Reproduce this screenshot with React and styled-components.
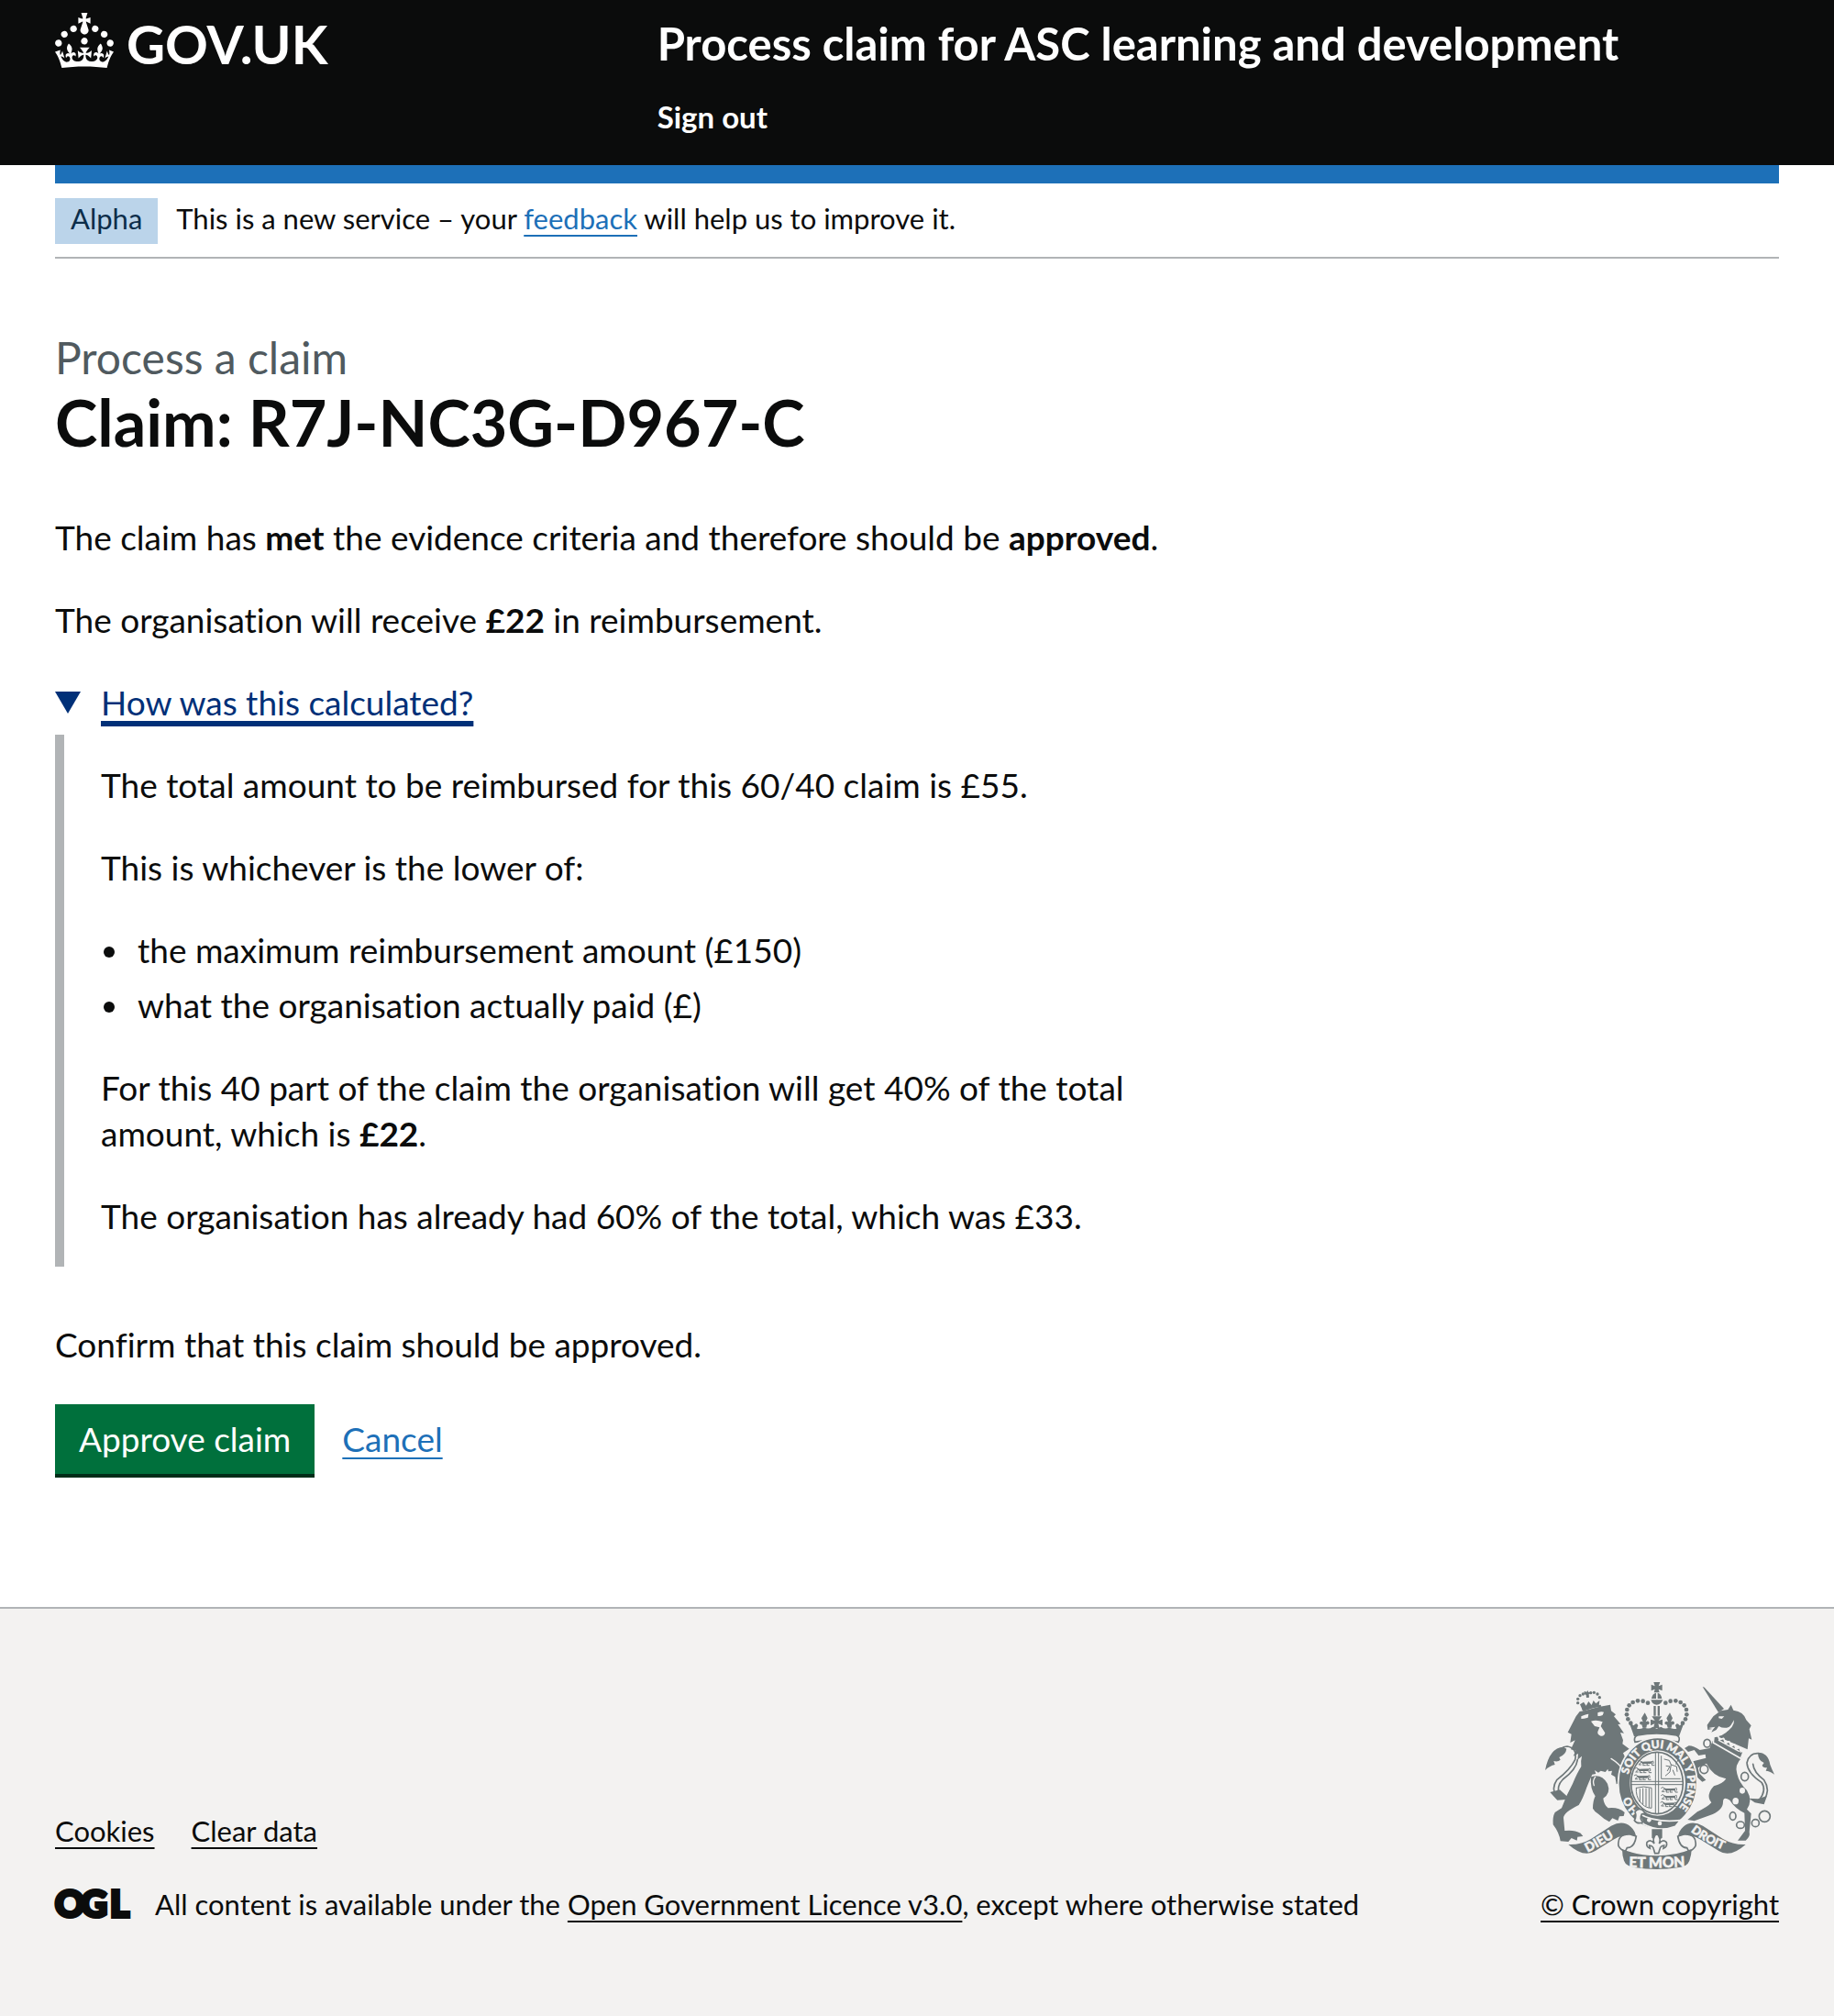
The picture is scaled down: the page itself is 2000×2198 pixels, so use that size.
import React from "react";
import styled, { createGlobalStyle, css } from "styled-components";

const color = {
  ink: "#0b0c0c",
  link: "#1d70b8",
  linkHover: "#003078",
  secondary: "#505a5f",
  border: "#b1b4b6",
  panel: "#f3f2f1",
  crest: "#6e7779",
};

const GlobalStyle = createGlobalStyle`
  *, *::before, *::after { box-sizing: border-box; }
  html { background: ${color.panel}; }
  body {
    margin: 0;
    background: #fff;
    color: ${color.ink};
    font-family: Lato, "Open Sans", sans-serif;
    font-size: 37px;
    font-variant-ligatures: none;
    line-height: 50px;
  }
`;

const Container = styled.div`
  margin: 0 60px;
`;

const Link = styled.a`
  color: ${(p) => (p.$plain ? color.ink : color.link)};
  text-decoration: underline;
  text-decoration-thickness: 2px;
  text-decoration-skip-ink: none;
  text-underline-offset: 6px;
`;

/* Header */
const Header = styled.header`
  background: ${color.ink};
  color: #fff;
`;

const HeaderGrid = styled(Container)`
  display: grid;
  grid-template-columns: 1fr 2fr;
  align-items: start;
  padding: 14px 0 33px;
`;

const HomeLink = styled.a`
  display: flex;
  align-items: flex-start;
  gap: 14px;
  color: #fff;
  font-size: 58px;
  font-weight: 700;
  line-height: 68px;
  text-decoration: none;
`;

const CrownSvg = styled.svg`
  width: 64px;
  height: 60px;
  fill: currentColor;
`;

const HeaderContent = styled.div`
  display: flex;
  flex-direction: column;
  align-items: flex-start;
  gap: 30px;
  padding: 3px 0 0 30px;
`;

const HeaderLink = styled.a`
  color: #fff;
  font-weight: 700;
  text-decoration: none;
  font-size: ${(p) => (p.$service ? 49 : 33)}px;
  line-height: ${(p) => (p.$service ? 60 : 40)}px;
`;

/* Phase banner */
const PhaseBanner = styled(Container)`
  border-top: 20px solid ${color.link};
  border-bottom: 2px solid ${color.border};
  padding: 16px 0 14px;
  display: flex;
  gap: 20px;
  font-size: 31px;
  line-height: 44px;
`;

const Tag = styled.strong`
  padding: 0 17px 6px;
  background: #bbd4ea;
  color: #0c2d4a;
  font-weight: 400;
`;

/* Main content */
const Main = styled.main`
  padding: 78px 0 141px;
`;

const Column = styled.div`
  width: 66.66%;
`;

const Caption = styled.span`
  display: block;
  color: ${color.secondary};
  font-size: 48px;
  line-height: 60px;
`;

const Heading = styled.h1`
  margin: 0 0 61px;
  font-size: 70px;
  font-weight: 700;
  line-height: 80px;
`;

const Paragraph = styled.p`
  margin: 0 0 40px;
`;

const Details = styled.details`
  margin-bottom: 60px;
`;

const Summary = styled.summary`
  display: flex;
  align-items: center;
  gap: 22px;
  margin-bottom: 10px;
  color: ${color.linkHover};
  cursor: pointer;
  list-style: none;
  &::-webkit-details-marker { display: none; }
  &::before {
    content: "";
    border: solid transparent;
    border-width: 24px 14px 0;
    border-top-color: currentColor;
  }
`;

const SummaryText = styled.span`
  text-decoration: underline;
  text-decoration-thickness: 6px;
  text-decoration-skip-ink: none;
  text-underline-offset: 6px;
`;

const DetailsText = styled.div`
  border-left: 10px solid ${color.border};
  padding: 30px 40px;
  & > :last-child { margin-bottom: 0; }
`;

const BulletList = styled.ul`
  margin: 0 0 40px;
  padding-left: 34px;
`;

const Bullet = styled.li`
  padding-left: 6px;
  & + & { margin-top: 10px; }
`;

const ButtonGroup = styled.div`
  display: flex;
  align-items: flex-start;
  gap: 30px;
  padding-bottom: 4px;
  line-height: 76px;
`;

const Button = styled.button`
  border: 0;
  padding: 0 26px;
  background: #00703c;
  box-shadow: 0 4px 0 #002d18;
  color: #fff;
  font: inherit;
  cursor: pointer;
`;

/* Footer */
const Footer = styled.footer`
  border-top: 2px solid ${color.border};
  padding: 80px 0 102px;
  background: ${color.panel};
  font-size: 31px;
  line-height: 40px;
`;

const FooterMeta = styled(Container)`
  display: flex;
  justify-content: space-between;
  align-items: flex-end;
`;

const FooterLinks = styled.ul`
  display: flex;
  gap: 40px;
  margin: 0 0 40px;
  padding: 0;
  list-style: none;
`;

const Licence = styled.div`
  display: flex;
  align-items: center;
  gap: 27px;
`;

const OglSvg = styled.svg`
  width: 82px;
  height: 52px;
  margin: -6px 0;
  overflow: visible;
  fill: ${color.ink};
  stroke: ${color.ink};
  stroke-width: 4;
  font-family: Lato, sans-serif;
  font-size: 40px;
  font-weight: 900;
`;

const CopyrightLink = styled(Link)`
  display: flex;
  flex-direction: column;
  align-items: center;
  gap: 18px;
`;

const crestText = css`
  fill: ${color.panel};
  stroke: ${color.panel};
  stroke-width: 1.5;
  font-family: Lato, sans-serif;
  font-weight: 900;
`;

const CrestSvg = styled.svg`
  width: 250px;
  height: 204px;
  fill: ${color.crest};
  .light { fill: ${color.panel}; }
  .line { fill: none; stroke: ${color.crest}; stroke-width: 5; stroke-linecap: round; stroke-linejoin: round; }
  .fine { stroke-width: 3; }
  .cut { stroke: ${color.panel}; stroke-width: 5; stroke-linejoin: round; }
  .cutLine { fill: none; stroke: ${color.panel}; stroke-width: 4; stroke-linecap: round; }
  .ring { fill: ${color.panel}; stroke: ${color.crest}; stroke-width: 5; }
  text { ${crestText} }
`;

function Crown() {
  return (
    <CrownSvg viewBox="0 0 32 30" aria-hidden="true">
      <path d="M22.6 10.4c-1 .4-2-.1-2.4-1-.4-.9.1-2 1-2.4.9-.4 2 .1 2.4 1s-.1 2-1 2.4m-5.9 6.7c-.9.4-2-.1-2.4-1-.4-.9.1-2 1-2.4.9-.4 2 .1 2.4 1s-.1 2-1 2.4m10.8-3.7c-1 .4-2-.1-2.4-1-.4-.9.1-2 1-2.4.9-.4 2 .1 2.4 1s0 2-1 2.4m3.3 4.8c-1 .4-2-.1-2.4-1-.4-.9.1-2 1-2.4.9-.4 2 .1 2.4 1s-.1 2-1 2.4M17 4.7l2.3 1.2V2.5l-2.3.7-.2-.2.9-3h-3.4l.9 3-.2.2c-.1.1-2.3-.7-2.3-.7v3.4L15 4.7c.1.1.1.2.2.2l-1.3 4c-.1.2-.1.4-.1.6 0 1.1.8 2 1.9 2.2h.7c1-.2 1.9-1.1 1.9-2.1 0-.2 0-.4-.1-.6l-1.3-4c-.1-.2 0-.2.1-.3m-7.6 5.7c.9.4 2-.1 2.4-1 .4-.9-.1-2-1-2.4-.9-.4-2 .1-2.4 1s0 2 1 2.4m-5 3c.9.4 2-.1 2.4-1 .4-.9-.1-2-1-2.4-.9-.4-2 .1-2.4 1s.1 2 1 2.4m-3.2 4.8c.9.4 2-.1 2.4-1 .4-.9-.1-2-1-2.4-.9-.4-2 .1-2.4 1s0 2 1 2.4m14.8 11c4.4 0 8.6.3 12.3.8 1.1-4.5 2.4-7 3.7-8.8l-2.5-.9c.2 1.3.3 1.9 0 2.7-.4-.4-.8-1.1-1.1-2.3l-1.2 4c.7-.5 1.3-.8 2-.9-1.1 2.5-2.6 3.1-3.5 3-1.1-.2-1.7-1.2-1.5-2.1.3-1.2 1.5-1.5 2.1-.1 1.1-2.3-.8-3-2-2.3 1.9-1.9 2.1-3.5.6-5.6-2.1 1.6-2.1 3.2-1.2 5.5-1.2-1.4-3.2-.6-2.5 1.6.9-1.4 2.1-.5 1.9.8-.2 1.1-1.7 2.1-3.5 1.9-2.7-.2-2.9-2.1-2.9-3.6.7-.1 1.9.5 2.9 1.9l.4-4.3c-1.1 1.1-2.1 1.4-3.2 1.4.4-1.2 2.1-3 2.1-3h-5.4s1.7 1.9 2.1 3c-1.1 0-2.1-.2-3.2-1.4l.4 4.3c1-1.4 2.2-2 2.9-1.9-.1 1.5-.2 3.4-2.9 3.6-1.9.2-3.4-.8-3.5-1.9-.2-1.3 1-2.2 1.9-.8.7-2.3-1.2-3-2.5-1.6.9-2.2.9-3.9-1.2-5.5-1.5 2-1.3 3.7.6 5.6-1.2-.7-3.1 0-2 2.3.6-1.4 1.8-1.1 2.1.1.2.9-.3 1.9-1.5 2.1-.9.2-2.4-.5-3.5-3 .6 0 1.2.3 2 .9l-1.2-4c-.3 1.1-.7 1.9-1.1 2.3-.3-.8-.2-1.4 0-2.7l-2.9.9C1.3 23 2.6 25.5 3.7 30c3.7-.5 7.9-.8 12.3-.8" />
    </CrownSvg>
  );
}

const archBeads = [[408, 140], [392, 134], [375, 133], [359, 138], [347, 148], [340, 162], [339, 178], [343, 193], [352, 206]];
const lionCrownBeads = [[179, 140], [179, 127], [186, 116], [196, 111], [221, 107], [232, 106], [243, 111], [250, 122]];
const chain = [[602, 272, 11, 13], [592, 357, 13, 14], [725, 381, 12, 14], [686, 510, 10, 13], [711, 539, 13, 11], [760, 533, 12, 12], [790, 511, 18, 18]];

// One passant lion of the English quarters, 60 units wide.
function SmallLion({ x, y }) {
  return (
    <g transform={`translate(${x} ${y})`}>
      <path className="line fine" d="M2 4q6-6 10 2q4 6 10 2l24-1q8-8 6 5M12 8l-8 8h8M20 9l-2 9h8M34 9l-4 9h8M46 8l2 10h7" />
      <path d="M8 4l10 2 30 0-4 7-28 0z" />
    </g>
  );
}

function Crest() {
  return (
    <CrestSvg viewBox="72 72 750 612" aria-hidden="true">
      <defs>
        <path id="motto" d="M342 402A98 114 0 0 1 538 402A98 114 0 0 1 440 516" />
        <path id="mottoEnd" d="M440 516A98 114 0 0 1 342 402" />
        <path id="ribbonLeft" d="M211 629Q262 604 322 564" />
        <path id="ribbonRight" d="M548 560Q600 602 682 631" />
        <path id="ribbonBase" d="M330 676Q437 682 546 674" />
      </defs>

      {/* royal crown */}
      <path d="M427 72h21l-5 13 12-5v20l-12-5 3 11h-18l3-11-12 5V80l12 5z" />
      <path d="M420 126q2-16 15-19v19zM454 126q-2-16-14-19v19zM418 130h39q-6 16-20 16t-19-16zM427 150h7v32h-7zM440 150h7v32h-7z" />
      {archBeads.map(([x, y]) => (
        <React.Fragment key={`${x}-${y}`}>
          <circle cx={x} cy={y} r="7" />
          <circle cx={874 - x} cy={y} r="7" />
        </React.Fragment>
      ))}
      <path d="M421 184h33l-11 14 13-4v20l-14-6 4 14h-20l4-14-13 6v-20l14 4z" />
      <path d="M398 172l9 18-6 12q10-6 12 3 0 8-8 6l-2 10h-12l-3-10q-7 1-7-6 3-8 11-3l-5-12zM480 172l9 18-6 12q10-6 12 3 0 8-8 6l-2 10h-12l-3-10q-7 1-7-6 3-8 11-3l-5-12z" />
      <path d="M346 204l16 10q9-12 14 0l-4 10q14 4 24-4 14 8 28-2l13 6 14-6q14 10 27 2 12 8 24 4l-4-10q5-12 14 0l15-10q-8 20-17 46-72-16-147 0-8-26-17-46z" />
      <path className="ring" d="M366 268q-6-16 8-22 62-12 128 0 14 6 6 22-70-16-142 0z" />

      {/* lion supporter */}
      <g>
        {lionCrownBeads.map(([x, y]) => <circle key={`${x}-${y}`} cx={x} cy={y} r="5" />)}
        <path d="M200 102l8 2 3-5 3 6 6 1-5 6 1 10-9 1-1-9-7-3zM186 145l12-8 8 12 8-14 10 12 6-15 8 10 12-10-2 18-52 17z" />
        <path d="M192 160q28-12 62-14l2 6q-34 4-60 14z" />
        <path d="M173 184l12-16 14-2q40-14 86-20l3 20 15 12-6 6 22 25-9 1 20 29-12-2 9 25-2 12 22 16-20 14 20 42 6 22 4 18-3 17-9-6-4 14-12-9-5 14-11-14-8 4-4-24-13-8 3-12-12 2-2-8-8 10-15-4-8 6-12-8 4 12-12 2q-10 22-18 42-12 36-26 58-50 24-50 42l4 42q30-4 52 8l8 10-18 2-2 12-18-8-10 12-26-2q-4-28-24-54-2-26 6-40l22-14q14-40 36-80 14-34 28-56-2-20 2-34l-14 12 2-20-16 8 8-18-16-4 14-30-16 8 4-28-12-6z" />
        <path d="M222 382q34-12 54 22 12 30-14 48 2 20 16 32 34-4 54 14l-3 12-14 1-5 14-18-8-10 12q-20-10-34-24-14-8-20-20 0-24 8-40-18-26-14-63z" />
        <path className="light" d="M190 184q16-8 24-8l-2 12q-14 4-22 4zM244 172q12-6 20-2l-4 10q-10 4-16 2zM222 200q18-6 38 2l-6 14 14 22q-2 12-14 10-12-4-10-14l6-14-16-4z" />
        <path className="cutLine" d="M288 322q26 16 42 40M232 410q-6-16 4-28" />
        <path className="line" d="M108 446q-16-28 2-54 44-34 60-66 8-38-26-44-12 0-20 8M118 442q-10-30 12-52 44-32 48-64" />
        <path d="M132 284q-46 2-60 76 14-14 32-18l-4-12q14 4 22-4l-4-8q22-10 24-28zM88 432l32-8 26 24-6 8-28 2-10-10z" />
      </g>

      {/* unicorn supporter */}
      <g>
        <path d="M587 87l6 2 64 70-18 12z" />
        <path d="M602 212l20-28 24-18 24-4 10-16 8 18q34 4 42 32l16 18-6 12 8 34-10-4-4 36-98-42q36-10 38-32-16 8-34-2l-8 12-16 8 6-12-18 4z" />
        <path className="light" d="M640 184l18 0-8 8-10-2zM690 196q2 26-34 44l-14-4q30-4 48-40zM606 222l22-4-6 8z" />
        <path d="M620 264l96 54q-26 26-16 54 6 28 32 54 20 34 0 62l14 14-6 60q4 16-12 28h-26l24-32-2-58q-32-16-48-42-22-14-22 6 0 28-44 44l-50 18-22-4 32-26q34-16 46-30-20-24 8-54 30-8 40-24-44-8-64-50l-28 14 4 18 22 22-12 6-28-26-8-40 48-12-2-12-22 4-14-18-20 6-12-12 14-8q16 0 36 14l32-6z" />
        <path className="cut" d="M624 250l-2 20 90 52 10-26-10 4-4-14-12 6-4-16-12 6-6-16-12 6-6-16-14 4-4-12z" />
        <path className="cutLine" d="M640 262l66 36" />
        <ellipse className="light" cx="717" cy="427" rx="9" ry="10" />
        <ellipse className="light" cx="695" cy="461" rx="10" ry="11" />
        {chain.map(([x, y, rx, ry]) => <ellipse key={`${x}-${y}`} className="ring" cx={x} cy={y} rx={rx} ry={ry} />)}
        <path className="line" d="M772 458q26-32 8-58-46-30-48-64 8-36 44-30M788 458q22-34 0-66-34-26-36-52" />
        <path d="M768 302q34 0 40 40 6 16 14 32-16-12-28-12l4-10q-14 0-16-8l6-8q-20-8-20-34zM738 452l30 2 30-10-10 28-30-6z" />
      </g>

      {/* garter with motto */}
      <ellipse className="cut" cx="440" cy="402" rx="129" ry="149" />
      <ellipse className="light" cx="440" cy="402" rx="91" ry="107" />
      <ellipse className="line" cx="438" cy="402" rx="85" ry="101" />
      <path className="line fine" d="M433 302v200M443 302v200M354 397h168M354 407h168" />
      <SmallLion x={374} y={326} />
      <SmallLion x={364} y={350} />
      <SmallLion x={362} y={373} />
      <SmallLion x={450} y={414} />
      <SmallLion x={450} y={438} />
      <SmallLion x={448} y={461} />
      <path className="line fine" d="M452 314v74h62M462 324l16 4 6 14 18 6 2 16M468 346l12 2-8 14M484 342l-4 24-14 12M490 360l6 16M500 340l6-12" />
      <path className="line fine" d="M370 418q24-8 50 0v66q-24 0-40-24M370 418q-2 26 12 46M382 422v38M392 420v50M402 420v56M412 420v62" />
      <text fontSize="36"><textPath href="#motto" startOffset="28">SOIT QUI MAL Y PENSE</textPath></text>
      <text fontSize="36"><textPath href="#mottoEnd" startOffset="66">HO</textPath></text>
      <path className="cut" d="M376 500q58 34 138 24l-16 20q-52 20-104-8z" />
      <circle className="light" cx="412" cy="523" r="7" />
      <circle className="light" cx="447" cy="534" r="7" />
      <path className="ring" d="M366 496q10-14 24-6l10 10-12 4q-8 14 4 26-18 8-28-6 8-12 2-28z" />

      {/* pendant */}
      <path d="M421 553h34v28l-17 12-17-12z" />
      <path className="ring" d="M437 566q16 18 8 34 12-16 24-4 4 14-10 20l2-10q-12 2-14 12l-4 14h-12l-4-14q-2-10-14-12l2 10q-14-6-10-20 12-12 24 4-8-16 8-34z" />

      {/* ribbon */}
      <path className="ring" d="M350 570q-44-2-38 38 8 14 22 18l6-12q24 0 30-38zM526 570q44-2 38 38-8 14-22 18l-6-12q-24 0-30-38z" />
      <path d="M148 603q40 2 74-18l66-43q38-20 64 3 14 12 18 33-24-14-42-4-18 4-34 14l-58 36q-38 24-88-21zM728 603q-40 2-74-18l-66-43q-38-20-64 3-14 12-18 33 24-14 42-4 18 4 34 14l58 36q38 24 88-21z" />
      <path d="M324 618q52 22 113 22t114-22q0 20-7 38-6 18-34 22-73 12-146 0-28-4-34-22-6-16-6-38z" />
      <text fontSize="42"><textPath href="#ribbonLeft">DIEU</textPath></text>
      <text fontSize="39"><textPath href="#ribbonRight">DROIT</textPath></text>
      <text fontSize="47" textAnchor="middle"><textPath href="#ribbonBase" startOffset="50%">ET MON</textPath></text>
    </CrestSvg>
  );
}

export default function App() {
  return (
    <>
      <GlobalStyle />
      <Header>
        <HeaderGrid>
          <HomeLink href="#home"><Crown />GOV.UK</HomeLink>
          <HeaderContent>
            <HeaderLink href="#service" $service>Process claim for ASC learning and development</HeaderLink>
            <HeaderLink href="#sign-out">Sign out</HeaderLink>
          </HeaderContent>
        </HeaderGrid>
      </Header>
      <PhaseBanner>
        <Tag>Alpha</Tag>
        <span>This is a new service – your <Link href="#feedback">feedback</Link> will help us to improve it.</span>
      </PhaseBanner>
      <Container>
        <Main>
          <Column>
            <Caption>Process a claim</Caption>
            <Heading>Claim: R7J-NC3G-D967-C</Heading>
            <Paragraph>The claim has <b>met</b> the evidence criteria and therefore should be <b>approved</b>.</Paragraph>
            <Paragraph>The organisation will receive <b>£22</b> in reimbursement.</Paragraph>
            <Details open>
              <Summary><SummaryText>How was this calculated?</SummaryText></Summary>
              <DetailsText>
                <Paragraph>The total amount to be reimbursed for this 60/40 claim is £55.</Paragraph>
                <Paragraph>This is whichever is the lower of:</Paragraph>
                <BulletList>
                  <Bullet>the maximum reimbursement amount (£150)</Bullet>
                  <Bullet>what the organisation actually paid (£)</Bullet>
                </BulletList>
                <Paragraph>For this 40 part of the claim the organisation will get 40% of the total amount, which is <b>£22</b>.</Paragraph>
                <Paragraph>The organisation has already had 60% of the total, which was £33.</Paragraph>
              </DetailsText>
            </Details>
            <Paragraph>Confirm that this claim should be approved.</Paragraph>
            <ButtonGroup>
              <Button type="button">Approve claim</Button>
              <Link href="#cancel">Cancel</Link>
            </ButtonGroup>
          </Column>
        </Main>
      </Container>
      <Footer>
        <FooterMeta>
          <div>
            <FooterLinks>
              <li><Link $plain href="#cookies">Cookies</Link></li>
              <li><Link $plain href="#clear-data">Clear data</Link></li>
            </FooterLinks>
            <Licence>
              <OglSvg viewBox="0 -6 82 52" aria-hidden="true"><text x="0 28 60" y="34">OGL</text></OglSvg>
              <span>All content is available under the <Link $plain href="#licence">Open Government Licence v3.0</Link>, except where otherwise stated</span>
            </Licence>
          </div>
          <CopyrightLink $plain href="#copyright"><Crest /><span>© Crown copyright</span></CopyrightLink>
        </FooterMeta>
      </Footer>
    </>
  );
}
